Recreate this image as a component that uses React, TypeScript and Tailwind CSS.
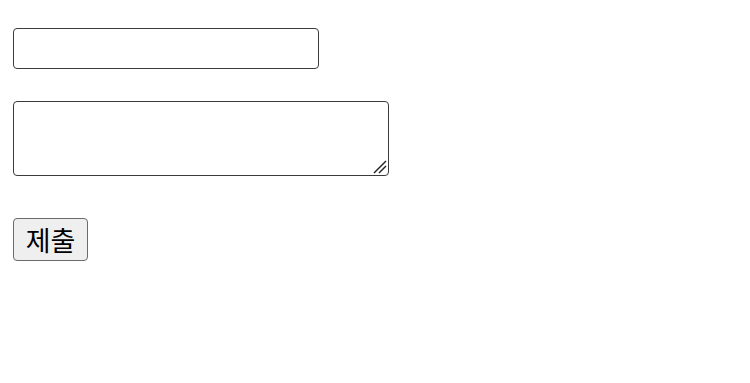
import React from "react";

export default function App() {
  return (
    <div className="bg-white w-[750px] h-[383px] pl-[13px] pt-[28px] flex flex-col items-start" style={{ fontFamily: '"Liberation Sans", "Noto Sans CJK KR", sans-serif' }}>
      <input type="text" className="w-[306px] h-[41px] border border-[#3b3b3b] rounded-[4px] bg-white outline-none px-2 text-[22px]" />
      <div className="relative mt-[32px] w-[376px] h-[75px]">
        <textarea className="w-[376px] h-[75px] border border-[#3b3b3b] rounded-[4px] bg-white outline-none block text-[22px] resize-none" />
        <svg className="absolute right-[2px] bottom-[2px] pointer-events-none" width="14" height="14" viewBox="0 0 14 14">
          <line x1="1" y1="13" x2="13" y2="1" stroke="#222" strokeWidth="1.4" />
          <line x1="6" y1="13" x2="13" y2="6" stroke="#222" strokeWidth="1.4" />
        </svg>
      </div>
      <button className="mt-[42px] w-[75px] h-[43px] border border-[#6b6b6b] rounded-[4px] bg-[#efefef] text-[27px] font-normal leading-none text-black flex items-center justify-center" style={{ fontFamily: '"Noto Sans CJK KR", sans-serif' }}>
        제출
      </button>
    </div>
  );
}
